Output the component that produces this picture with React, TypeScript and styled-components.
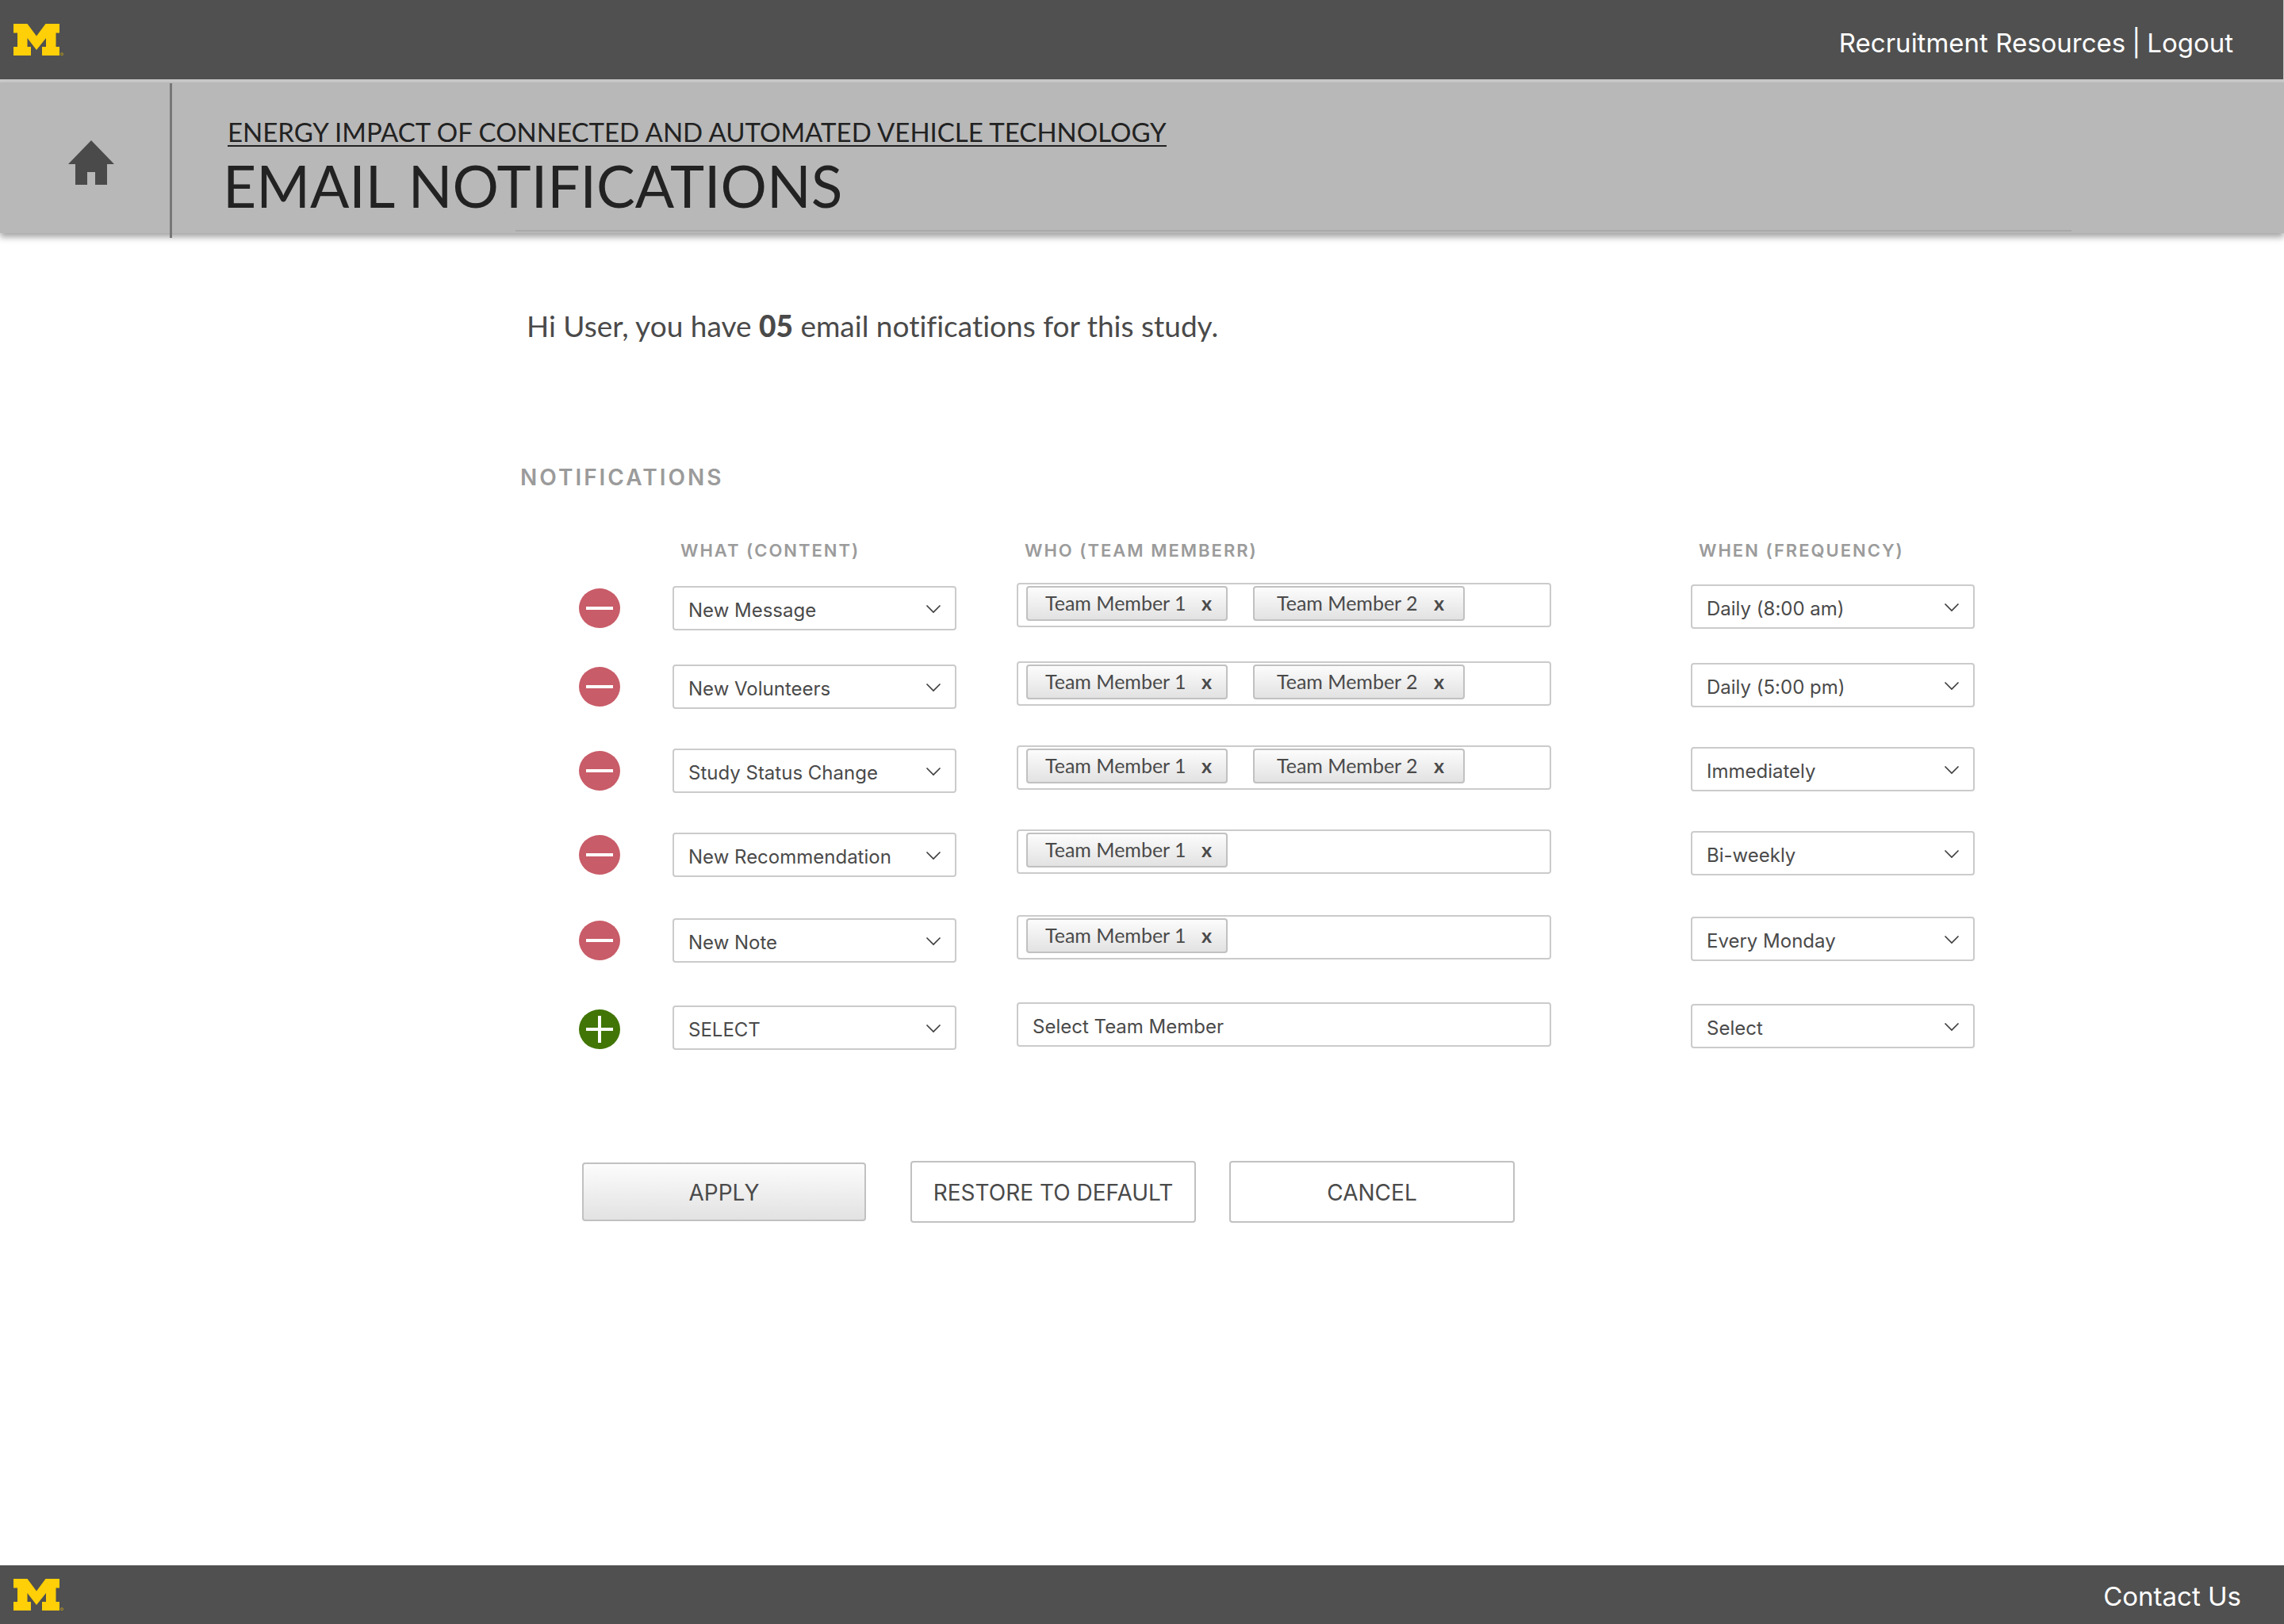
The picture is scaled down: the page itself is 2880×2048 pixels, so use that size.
import React from "react";
import styled, { createGlobalStyle, css } from "styled-components";

const sans = `Inter, "Liberation Sans", sans-serif`;
const humanist = `Lato, "Open Sans", sans-serif`;

const GlobalStyle = createGlobalStyle`
  *, *::before, *::after { box-sizing: border-box; }
  body {
    margin: 0;
    background: #fff;
    color: #4a4a4a;
    font-family: ${sans};
    font-variant-ligatures: none;
  }
  button, input, select { font: inherit; color: inherit; }
`;

const Page = styled.div`
  display: flex;
  flex-direction: column;
  min-height: 100vh;
`;

const TopBar = styled.header`
  display: flex;
  align-items: center;
  justify-content: space-between;
  height: 104px;
  padding: 0 63px 0 17px;
  background: #505050;
  border-right: 1px solid #c9c9c9;
  border-bottom: 4px solid #cacaca;
`;

const BottomBar = styled.footer`
  display: flex;
  align-items: center;
  justify-content: space-between;
  height: 74px;
  margin-top: auto;
  padding: 0 54px 0 17px;
  background: #505050;
`;

const BarLinks = styled.nav<{ $drop: number }>`
  display: flex;
  gap: 8px;
  padding-top: ${(p) => p.$drop}px;
  color: #fff;
  font-size: 33px;
  line-height: 40px;
`;

const BarLink = styled.a`
  color: inherit;
  text-decoration: none;
`;

const LogoLink = styled.a`
  display: block;
  height: 40px;
`;

const TitleBand = styled.section`
  display: flex;
  height: 190px;
  background: #b8b8b8;
  box-shadow: 0 5px 8px rgba(0, 0, 0, 0.36);
`;

const HomeLink = styled.a`
  display: flex;
  align-items: center;
  justify-content: center;
  width: 214px;
  padding: 12px 0 0 16px;
`;

const BandRule = styled.div`
  width: 3px;
  margin: 1px 0 -6px;
  background: #777;
`;

const Titles = styled.div`
  flex: 1;
  display: flex;
  flex-direction: column;
  padding: 45px 268px 2px 70px;
  color: #222;
  font-family: ${humanist};
`;

const StudyLink = styled.a`
  align-self: flex-start;
  border-bottom: 2px solid #222;
  color: inherit;
  font-size: 33px;
  line-height: 34px;
  text-decoration: none;
`;

const PageTitle = styled.h1`
  margin: 5px 0 0 -6px;
  font-size: 73px;
  font-weight: 400;
  line-height: 88px;
`;

const TitleRule = styled.hr`
  width: calc(100% - 363px);
  height: 2px;
  margin: auto 0 0 auto;
  border: 0;
  background: #a9a9a9;
`;

const Main = styled.main`
  padding: 92px 390px 60px 656px;
`;

const Summary = styled.p`
  margin: 0 0 0 8px;
  font-family: ${humanist};
  font-size: 37px;
  line-height: 50px;

  strong {
    font-weight: 900;
  }
`;

const SectionTitle = styled.h2`
  margin: 148px 0 0;
  color: #9b9b9b;
  font-size: 28px;
  font-weight: 600;
  letter-spacing: 3px;
  line-height: 36px;
`;

const Rules = styled.table`
  width: calc(100% - 74px);
  margin: 54px 0 0 74px;
  border-collapse: collapse;
  table-layout: fixed;
`;

const HeadCell = styled.th<{ $width?: number }>`
  width: ${(p) => (p.$width ? `${p.$width}px` : "auto")};
  height: 61px;
  padding: 0 0 0 10px;
  color: #9b9b9b;
  font-size: 22px;
  font-weight: 600;
  letter-spacing: 2px;
  line-height: 40px;
  text-align: left;
  vertical-align: top;
`;

const RuleRow = styled.tr<{ $height: number }>`
  height: ${(p) => p.$height}px;
`;

const Cell = styled.td<{ $top?: number; $right?: number }>`
  padding: ${(p) => p.$top ?? 0}px ${(p) => p.$right ?? 0}px 0 0;
  vertical-align: top;
`;

const RoundButton = styled.button<{ $add?: boolean }>`
  display: flex;
  align-items: center;
  justify-content: center;
  width: 52px;
  height: 50px;
  padding: 0;
  border: 0;
  border-radius: 50%;
  background: ${(p) => (p.$add ? "#417505" : "#c85c68")};
`;

const field = css`
  width: 100%;
  height: 56px;
  border: 2px solid #cbcbcb;
  border-radius: 4px;
  background: #fff;
`;

const SelectWrap = styled.div`
  position: relative;
  width: 358px;
`;

const Select = styled.select`
  ${field}
  display: block;
  appearance: none;
  padding: 4px 50px 0 18px;
  font-size: 24px;
`;

const Chevron = styled.svg`
  position: absolute;
  top: 23px;
  right: 19px;
  pointer-events: none;
`;

const Members = styled.div`
  ${field}
  display: flex;
  align-items: flex-start;
  gap: 32px;
  padding: 2px 10px;
`;

const MemberInput = styled.input`
  ${field}
  display: block;
  padding: 4px 18px 0;
  font-size: 24px;

  &::placeholder {
    color: #4a4a4a;
    opacity: 1;
  }
`;

const Chip = styled.span<{ $wide: boolean }>`
  display: flex;
  align-items: center;
  justify-content: space-between;
  width: ${(p) => (p.$wide ? 267 : 254)}px;
  height: 44px;
  padding: 0 ${(p) => (p.$wide ? 24 : 18)}px 2px ${(p) => (p.$wide ? 28 : 22)}px;
  border: 2px solid #c1c1c1;
  border-radius: 4px;
  background: linear-gradient(#fcfcfc, #e2e2e2);
  font-family: ${humanist};
  font-size: 25px;
  white-space: nowrap;
`;

const ChipRemove = styled.button`
  padding: 0;
  border: 0;
  background: none;
  font-weight: 700;
  line-height: 30px;
`;

const Actions = styled.div`
  display: flex;
  align-items: center;
  padding: 90px 0 0 78px;
`;

const Action = styled.button<{ $primary?: boolean }>`
  width: ${(p) => (p.$primary ? 358 : 360)}px;
  height: ${(p) => (p.$primary ? 74 : 78)}px;
  margin-right: ${(p) => (p.$primary ? 56 : 42)}px;
  padding: 2px 0 0;
  border: 2px solid #c1c1c1;
  border-radius: 4px;
  background: ${(p) => (p.$primary ? "linear-gradient(#fcfcfc, #e2e2e2)" : "#fff")};
  font-size: 28px;
`;

function BlockM() {
  return (
    <svg width="64" height="40" viewBox="0 0 64 40" aria-hidden="true">
      <path
        fill="#ffcf07"
        d="M0 0H17.5L29 15.5L40.5 0H58V11.5H53.5V29H58V40H36V29H41V18L29 33L17.5 18V29H22V40H0V29H5V11.5H0Z"
      />
      <circle cx="61" cy="38.2" r="1.5" fill="none" stroke="#b8981c" strokeWidth="1" />
    </svg>
  );
}

function SelectField({ label, value }: { label: string; value: string }) {
  return (
    <SelectWrap>
      <Select aria-label={label} defaultValue={value}>
        <option>{value}</option>
      </Select>
      <Chevron width="20" height="12" viewBox="0 0 20 12" fill="none" aria-hidden="true">
        <path d="M1.5 1.5L10 10L18.5 1.5" stroke="#3c3c3c" strokeWidth="1.6" />
      </Chevron>
    </SelectWrap>
  );
}

type Rule = { what: string; members: string[]; when: string; height: number };

const rules: Rule[] = [
  { what: "New Message", members: ["Team Member 1", "Team Member 2"], when: "Daily (8:00 am)", height: 99 },
  { what: "New Volunteers", members: ["Team Member 1", "Team Member 2"], when: "Daily (5:00 pm)", height: 106 },
  { what: "Study Status Change", members: ["Team Member 1", "Team Member 2"], when: "Immediately", height: 106 },
  { what: "New Recommendation", members: ["Team Member 1"], when: "Bi-weekly", height: 108 },
  { what: "New Note", members: ["Team Member 1"], when: "Every Monday", height: 110 },
];

export default function App() {
  return (
    <>
      <GlobalStyle />
      <Page>
        <TopBar>
          <LogoLink href="#" aria-label="University of Michigan">
            <BlockM />
          </LogoLink>
          <BarLinks $drop={8}>
            <BarLink href="#">Recruitment Resources</BarLink>
            <span>|</span>
            <BarLink href="#">Logout</BarLink>
          </BarLinks>
        </TopBar>

        <TitleBand>
          <HomeLink href="#" aria-label="Home">
            <svg width="58" height="56" viewBox="0 0 58 56" aria-hidden="true">
              <path fill="#4a4a4a" d="M29 0L58 30H49V56H34V40H24V56H9V30H0Z" />
            </svg>
          </HomeLink>
          <BandRule />
          <Titles>
            <StudyLink href="#">ENERGY IMPACT OF CONNECTED AND AUTOMATED VEHICLE TECHNOLOGY</StudyLink>
            <PageTitle>EMAIL NOTIFICATIONS</PageTitle>
            <TitleRule />
          </Titles>
        </TitleBand>

        <Main>
          <Summary>
            Hi User, you have <strong>05</strong> email notifications for this study.
          </Summary>
          <SectionTitle>NOTIFICATIONS</SectionTitle>
          <Rules>
            <thead>
              <tr>
                <HeadCell $width={118} aria-label="Actions" />
                <HeadCell $width={434}>WHAT (CONTENT)</HeadCell>
                <HeadCell>WHO (TEAM MEMBERR)</HeadCell>
                <HeadCell $width={358}>WHEN (FREQUENCY)</HeadCell>
              </tr>
            </thead>
            <tbody>
              {rules.map((rule) => (
                <RuleRow key={rule.what} $height={rule.height}>
                  <Cell $top={7}>
                    <RoundButton type="button" aria-label={`Remove ${rule.what}`}>
                      <svg width="34" height="4" viewBox="0 0 34 4" aria-hidden="true">
                        <rect width="34" height="4" fill="#fff" />
                      </svg>
                    </RoundButton>
                  </Cell>
                  <Cell $top={4}>
                    <SelectField label="What" value={rule.what} />
                  </Cell>
                  <Cell $right={176}>
                    <Members>
                      {rule.members.map((name, i) => (
                        <Chip key={name} $wide={i > 0}>
                          {name}
                          <ChipRemove type="button" aria-label={`Remove ${name}`}>
                            x
                          </ChipRemove>
                        </Chip>
                      ))}
                    </Members>
                  </Cell>
                  <Cell $top={2}>
                    <SelectField label="When" value={rule.when} />
                  </Cell>
                </RuleRow>
              ))}
              <RuleRow $height={110}>
                <Cell $top={9}>
                  <RoundButton type="button" $add aria-label="Add notification">
                    <svg width="34" height="34" viewBox="0 0 34 34" aria-hidden="true">
                      <path d="M0 17H34M17 0V34" stroke="#fff" strokeWidth="4" />
                    </svg>
                  </RoundButton>
                </Cell>
                <Cell $top={4}>
                  <SelectField label="What" value="SELECT" />
                </Cell>
                <Cell $right={176}>
                  <MemberInput aria-label="Who" placeholder="Select Team Member" />
                </Cell>
                <Cell $top={2}>
                  <SelectField label="When" value="Select" />
                </Cell>
              </RuleRow>
            </tbody>
          </Rules>
          <Actions>
            <Action type="submit" $primary>APPLY</Action>
            <Action type="button">RESTORE TO DEFAULT</Action>
            <Action type="button">CANCEL</Action>
          </Actions>
        </Main>

        <BottomBar>
          <LogoLink href="#" aria-label="University of Michigan">
            <BlockM />
          </LogoLink>
          <BarLinks $drop={4}>
            <BarLink href="#">Contact Us</BarLink>
          </BarLinks>
        </BottomBar>
      </Page>
    </>
  );
}
